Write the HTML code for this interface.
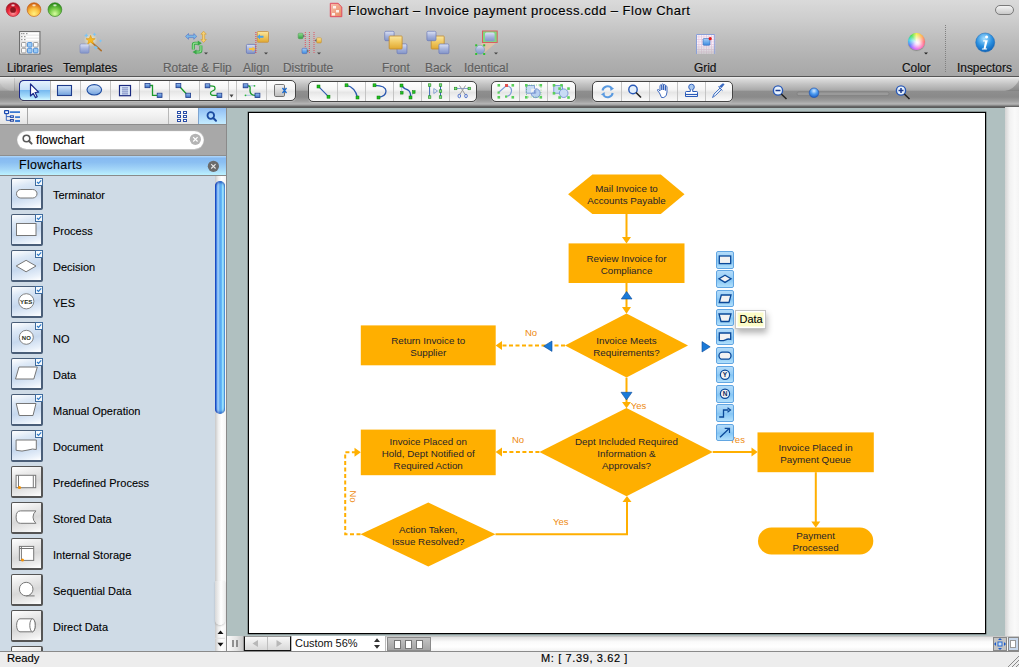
<!DOCTYPE html>
<html><head><meta charset="utf-8">
<style>
*{margin:0;padding:0;box-sizing:border-box}
html,body{width:1019px;height:667px;overflow:hidden;background:#b0c0c0;font-family:"Liberation Sans",sans-serif;}
.abs{position:absolute}
#top{left:0;top:0;width:1019px;height:77px;background:linear-gradient(#dadada 0px,#cdcdcd 20px,#bdbdbd 40px,#b0b0b0 60px,#a7a7a7 76px);border-bottom:1px solid #555}
.tl{position:absolute;top:2px;width:15px;height:15px;border-radius:50%}
.lbl{position:absolute;top:61px;font-size:11.9px;color:#111;-webkit-text-stroke:0.2px currentColor;white-space:nowrap;text-shadow:0 1px 0 rgba(255,255,255,0.35)}
.lbl.dis{color:#5e5e5e}
#tb2{left:0;top:77px;width:1019px;height:30px;background:linear-gradient(#f0f0f0 0px,#dcdcdc 2px,#c4c4c4 7px,#aaaaaa 13px,#8e8e8e 14.5px,#8a8a8a 20px,#9e9e9e 24px,#b6b6b6 27px,#7a7a7a 29px,#505050 30px);}
.seg{position:absolute;top:3px;height:21px;border:1px solid #454545;border-radius:5px;background:linear-gradient(#fefefe,#f6f6f6 40%,#e6e6e6 55%,#f2f2f2 80%,#fafafa);overflow:hidden;box-shadow:0 1px 1px rgba(255,255,255,0.3)}
.seg .d{position:absolute;top:0;bottom:0;width:1px;background:#c4c4c4}
#panel{left:0;top:107px;width:227px;height:544px;background:#cfdbe6;border-right:1px solid #8a8a8a}
#status{left:0;top:651px;width:1019px;height:16px;background:#ededed;border-top:1px solid #8a8a8a}
.st{position:absolute;font-size:11px;color:#000;-webkit-text-stroke:0.15px #000;white-space:nowrap}
.item{position:absolute;left:11px;width:32px;height:32px}
.ic{position:absolute;left:11px;width:32px;height:32px;border:1px solid #4c5c70;border-right-width:2px;border-bottom-width:2px;border-radius:2px}
.ic.b{background:linear-gradient(165deg,#ffffff 0,#dce8f6 25%,#c6d8ee 55%,#e8f0fa 85%,#ffffff 100%);border-color:#4a5e78}
.ic.g{background:linear-gradient(165deg,#ffffff 0,#ececec 25%,#d8d8d8 55%,#efefef 85%,#ffffff 100%);border-color:#555}
.ic svg{left:-1px!important;top:-1px!important}
.ic svg.chk{position:absolute;left:23px!important;top:-1px!important}
.qb{position:absolute;left:716px;width:18px;height:17.4px;border:1px solid #62a6e2;border-radius:2px;background:linear-gradient(#b4dcfa,#94cdf6 45%,#86c6f4 55%,#b2e0fc)}
.qb svg{position:absolute;left:-1px;top:-1px}
.itxt{position:absolute;left:53px;font-size:11px;color:#000;-webkit-text-stroke:0.1px #000;white-space:nowrap;letter-spacing:0}
</style></head><body>

<!-- TITLE + TOOLBAR -->
<div id="top" class="abs">
  <svg class="abs" style="left:0;top:0" width="70" height="20" viewBox="0 0 70 20">
  <defs>
   <radialGradient id="tlr" cx="0.5" cy="0.75" r="0.7"><stop offset="0" stop-color="#ff9aa0"/><stop offset="0.55" stop-color="#f0283a"/><stop offset="1" stop-color="#a01020"/></radialGradient>
   <radialGradient id="tlo" cx="0.5" cy="0.8" r="0.75"><stop offset="0" stop-color="#fff080"/><stop offset="0.5" stop-color="#fbc040"/><stop offset="1" stop-color="#d06010"/></radialGradient>
   <radialGradient id="tlg" cx="0.5" cy="0.8" r="0.75"><stop offset="0" stop-color="#d8fca0"/><stop offset="0.5" stop-color="#78cc48"/><stop offset="1" stop-color="#2a8a18"/></radialGradient>
   <radialGradient id="tlh" cx="0.5" cy="0.5" r="0.5"><stop offset="0" stop-color="#fff" stop-opacity="0.95"/><stop offset="1" stop-color="#fff" stop-opacity="0"/></radialGradient>
  </defs>
  <circle cx="13.05" cy="9.6" r="6.9" fill="url(#tlr)" stroke="#a81828" stroke-width="0.6"/>
  <circle cx="13.05" cy="9.9" r="2.9" fill="#8a1820"/>
  <ellipse cx="13.05" cy="5.3" rx="2.6" ry="1.6" fill="url(#tlh)"/>
  <circle cx="34" cy="9.6" r="6.9" fill="url(#tlo)" stroke="#c05a10" stroke-width="0.6"/>
  <ellipse cx="34" cy="5.3" rx="2.6" ry="1.6" fill="url(#tlh)"/>
  <circle cx="54.9" cy="9.6" r="6.9" fill="url(#tlg)" stroke="#2a7a18" stroke-width="0.6"/>
  <ellipse cx="54.9" cy="5.3" rx="2.6" ry="1.6" fill="url(#tlh)"/>
</svg>
  <svg class="abs" style="left:329px;top:2px" width="15" height="16" viewBox="0 0 15 16"><defs><linearGradient id="dg" x1="0" y1="0" x2="1" y2="1"><stop offset="0" stop-color="#f8c0b0"/><stop offset="1" stop-color="#e88a60"/></linearGradient></defs><path d="M1.3 1.3 H9 L12.8 5 V14.7 H1.3 Z" fill="url(#dg)" stroke="#e04a60" stroke-width="1"/><rect x="4" y="4" width="3" height="2.5" fill="#fff" opacity="0.85"/><rect x="7" y="8" width="3" height="2.5" fill="#fff" opacity="0.85"/><rect x="3" y="11" width="3" height="2.5" fill="#fff" opacity="0.85"/></svg>
  <div class="abs" style="left:348px;top:3px;font-size:13px;letter-spacing:0.5px;color:#000;-webkit-text-stroke:0.15px #000;white-space:nowrap;text-shadow:0 1px 0 rgba(255,255,255,.5)">Flowchart – Invoice payment process.cdd – Flow Chart</div>
  <div class="abs" style="left:995px;top:5px;width:19px;height:10px;border-radius:5px;border:1px solid #7a7a7a;background:linear-gradient(#f4f4f4,#c8c8c8)"></div>

  <div class="lbl" style="left:7px">Libraries</div>
  <div class="lbl" style="left:63px">Templates</div>
  <div class="lbl dis" style="left:163px">Rotate &amp; Flip</div>
  <div class="lbl dis" style="left:243px">Align</div>
  <div class="lbl dis" style="left:283px">Distribute</div>
  <div class="lbl dis" style="left:382px">Front</div>
  <div class="lbl dis" style="left:425px">Back</div>
  <div class="lbl dis" style="left:464px">Identical</div>
  <div class="lbl" style="left:694px">Grid</div>
  <div class="lbl" style="left:902px">Color</div>
  <div class="lbl" style="left:957px">Inspectors</div>
  <div class="abs" style="left:945px;top:25px;height:47px;border-left:1px dotted #808080"></div>
  <div class="abs" style="left:908px;top:33px;width:17.4px;height:17.4px;border-radius:50%;background:radial-gradient(circle at 55% 55%,#ffffff 0,rgba(255,255,255,0.85) 18%,rgba(255,255,255,0) 72%),conic-gradient(from 0deg,#f0f040,#ffa030 45deg,#ff3040 95deg,#ff30b0 150deg,#c030ff 200deg,#4060ff 240deg,#30d0e8 280deg,#40e050 320deg,#f0f040);box-shadow:0 1px 1px rgba(0,0,0,0.25)"></div>
<svg class="abs" style="left:0;top:0" width="1019" height="76" viewBox="0 0 1019 76">
<defs>
 <linearGradient id="ybx" x1="0" y1="0" x2="0" y2="1"><stop offset="0" stop-color="#fbe7a0"/><stop offset="0.5" stop-color="#f0c860"/><stop offset="1" stop-color="#e0a830"/></linearGradient>
 <linearGradient id="bbx" x1="0" y1="0" x2="0" y2="1"><stop offset="0" stop-color="#dce2f4"/><stop offset="0.5" stop-color="#a8b4dc"/><stop offset="1" stop-color="#8294c8"/></linearGradient>
 <linearGradient id="gbx" x1="0" y1="0" x2="0" y2="1"><stop offset="0" stop-color="#90e090"/><stop offset="1" stop-color="#30a040"/></linearGradient>
 <linearGradient id="lbb" x1="0" y1="0" x2="0" y2="1"><stop offset="0" stop-color="#a8d0f8"/><stop offset="1" stop-color="#3a8ae0"/></linearGradient>
 <radialGradient id="info" cx="0.45" cy="0.3" r="0.75"><stop offset="0" stop-color="#a8e0ff"/><stop offset="0.55" stop-color="#2a90e0"/><stop offset="1" stop-color="#0a5ab0"/></radialGradient>
 <radialGradient id="glow" cx="0.5" cy="0.5" r="0.5"><stop offset="0" stop-color="#fff8c0" stop-opacity="0.9"/><stop offset="1" stop-color="#fff8c0" stop-opacity="0"/></radialGradient>
</defs>
<!-- Libraries -->
<rect x="19.5" y="31.5" width="20.5" height="22.5" fill="#dcdcdc" stroke="#6e6e6e" stroke-width="1"/>
<g fill="#fff"><rect x="20.5" y="32.5" width="18.5" height="2.2"/><rect x="20.5" y="35.5" width="18.5" height="2.2"/><rect x="20.5" y="38.5" width="18.5" height="2.2"/></g>
<g fill="#9a9a9a"><rect x="21" y="33" width="1.5" height="1.2"/><rect x="23" y="33" width="1.5" height="1.2"/><rect x="26" y="33" width="1.5" height="1.2"/><rect x="21" y="36" width="1.5" height="1.2"/><rect x="24" y="36" width="1.5" height="1.2"/><rect x="21" y="39" width="1.5" height="1.2"/><rect x="24" y="39" width="1.5" height="1.2"/></g>
<rect x="20.5" y="41.5" width="18.5" height="12" fill="#f4f4f4"/>
<g stroke="#888" stroke-width="0.8" fill="#fafafa"><rect x="21.5" y="42.5" width="4.5" height="4.6" rx="0.8"/><rect x="33.5" y="42.5" width="4.5" height="4.6" rx="0.8"/><rect x="21.5" y="48.3" width="4.5" height="4.6" rx="0.8"/></g>
<g stroke="#3a80d0" stroke-width="0.8" fill="#9ccaf4"><rect x="27.5" y="42.5" width="4.5" height="4.6" rx="0.8"/><rect x="27.5" y="48.3" width="4.5" height="4.6" rx="0.8"/><rect x="33.5" y="48.3" width="4.5" height="4.6" rx="0.8"/></g>
<!-- Templates -->
<rect x="80" y="44" width="9" height="9.2" rx="1.2" fill="url(#bbx)" stroke="#7a88c0" stroke-width="0.6"/>
<circle cx="90.6" cy="40" r="7" fill="url(#glow)"/>
<path d="M91.5 42 L101.2 50.6" stroke="#b0702a" stroke-width="1.6" stroke-linecap="round"/>
<path d="M90.6 35.3 L91.9 38.5 L95.2 38.7 L92.6 40.8 L93.5 44 L90.6 42.2 L87.7 44 L88.6 40.8 L86 38.7 L89.3 38.5 Z" fill="#f8b820" stroke="#d89010" stroke-width="0.5"/>
<g fill="#7cc4f4"><path d="M86.3 33.3 l0.8 1.4 1.4 0.8 -1.4 0.8 -0.8 1.4 -0.8 -1.4 -1.4 -0.8 1.4 -0.8z"/><path d="M94.5 32.5 l0.7 1.2 1.2 0.7 -1.2 0.7 -0.7 1.2 -0.7 -1.2 -1.2 -0.7 1.2 -0.7z"/><path d="M100.5 39.2 l0.6 1 1 0.6 -1 0.6 -0.6 1 -0.6 -1 -1 -0.6 1 -0.6z"/><path d="M95.8 45.5 l0.8 1.3 1.3 0.8 -1.3 0.8 -0.8 1.3 -0.8 -1.3 -1.3 -0.8 1.3 -0.8z"/></g>
<!-- Rotate & Flip -->
<path d="M185.5 36.4 L188.5 33.5 V35.2 H193.8 V33.5 L196.8 36.4 L193.8 39.3 V37.6 H188.5 V39.3 Z" fill="#78b8e8" stroke="#5a7ac8" stroke-width="0.7"/>
<path d="M203.6 31.2 L206.3 34.2 H204.7 V39.5 H206.3 L203.6 42.5 L200.9 39.5 H202.5 V34.2 H200.9 Z" fill="#f8d070" stroke="#d0a040" stroke-width="0.7"/>
<path d="M193.3 49.5 V45 Q193.3 43.2 195 43.2 H198.5 M200.9 45.5 V50.3 Q200.9 52 199.2 52 H195.8" stroke="#3aa848" stroke-width="3" fill="none"/>
<path d="M193.3 49.5 V45 Q193.3 43.2 195 43.2 H198.5 M200.9 45.5 V50.3 Q200.9 52 199.2 52 H195.8" stroke="#90e090" stroke-width="1.2" fill="none"/>
<path d="M197.8 40.6 L201.8 43.2 L197.8 45.8 Z M196.5 49.4 L192.5 52 L196.5 54.6 Z" fill="#3aa848"/>
<path d="M204 52.5 H208 L206 54.5 Z" fill="#444"/>
<!-- Align -->
<rect x="257.3" y="31.5" width="11.2" height="10.8" rx="0.8" fill="url(#ybx)" stroke="#c89040" stroke-width="0.8"/>
<rect x="246.4" y="44.4" width="9" height="9" rx="1.2" fill="url(#bbx)" stroke="#6a7ab8" stroke-width="0.8"/>
<path d="M255.9 32 V54" stroke="#e04050" stroke-width="1" stroke-dasharray="1 1"/>
<path d="M257 36.8 L260 34.3 V35.8 H263.5 V37.8 H260 V39.3 Z" fill="#4aa0e8"/>
<path d="M255.5 49 L252.5 46.5 V48 H249 V50 H252.5 V51.5 Z" fill="#f8c040"/>
<path d="M264 52.5 H268 L266 54.5 Z" fill="#444"/>
<!-- Distribute -->
<path d="M305.3 32 V54 M309.4 32 V54 M314 32 V54" stroke="#e05060" stroke-width="1" stroke-dasharray="1 1"/>
<rect x="298.2" y="33.2" width="4.8" height="5.5" rx="1" fill="url(#gbx)" stroke="#5a9a5a" stroke-width="0.6"/>
<rect x="302" y="48.3" width="5" height="5.3" rx="1" fill="url(#lbb)" stroke="#4a6ab8" stroke-width="0.6"/>
<rect x="316.6" y="37.8" width="4.8" height="5.2" rx="1" fill="url(#ybx)" stroke="#c09040" stroke-width="0.6"/>
<path d="M303.2 34.5 L305 36 L303.2 37.5 Z M307.2 49.5 L309 51 L307.2 52.5 Z M316.4 39 L314.6 40.4 L316.4 41.8 Z" fill="#666"/>
<path d="M317 52.5 H321 L319 54.5 Z" fill="#444"/>
<!-- Front -->
<rect x="384.7" y="31.3" width="9.4" height="9.4" rx="1.2" fill="url(#bbx)" stroke="#6a7ab8" stroke-width="0.7"/>
<rect x="397" y="43.9" width="9.9" height="9.8" rx="1.2" fill="url(#bbx)" stroke="#6a7ab8" stroke-width="0.7"/>
<rect x="389.2" y="36" width="12.9" height="13" rx="0.8" fill="url(#ybx)" stroke="#c08a30" stroke-width="0.8"/>
<!-- Back -->
<rect x="431.2" y="36" width="13" height="13" rx="0.8" fill="url(#ybx)" stroke="#c08a30" stroke-width="0.8"/>
<rect x="426.9" y="31.3" width="9.1" height="9.4" rx="1.2" fill="url(#bbx)" stroke="#6a7ab8" stroke-width="0.7"/>
<rect x="438.9" y="44" width="10" height="9.7" rx="1.2" fill="url(#bbx)" stroke="#6a7ab8" stroke-width="0.7"/>
<!-- Identical -->
<path d="M477 46 L483 42 L497 42 L484 53 Z" fill="#f4c8a0" opacity="0.6"/>
<rect x="482.5" y="31" width="14.7" height="11.5" fill="#80d880" stroke="#d86060" stroke-width="1"/>
<rect x="485" y="32.5" width="9.6" height="8.7" rx="1.5" fill="url(#bbx)"/>
<circle cx="480.1" cy="49.6" r="4.4" fill="url(#bbx)" stroke="#5aa0b0" stroke-width="0.6"/>
<g fill="#30c030"><rect x="475.2" y="44.3" width="2" height="2"/><rect x="483.2" y="44.3" width="2" height="2"/><rect x="475.2" y="53" width="2" height="2"/><rect x="483.2" y="53" width="2" height="2"/></g>
<path d="M494 52.5 H498 L496 54.5 Z" fill="#444"/>
<!-- Grid -->
<defs><pattern id="gp" width="2.5" height="2.5" patternUnits="userSpaceOnUse" x="696" y="34"><rect width="2.5" height="2.5" fill="#e8c8e0"/><rect x="0.7" y="0.7" width="1.8" height="1.8" fill="#f8f4fc"/></pattern>
<linearGradient id="gfade" x1="0" y1="0" x2="0" y2="1"><stop offset="0" stop-color="#b0b0b0" stop-opacity="0"/><stop offset="1" stop-color="#b0b0b0" stop-opacity="0.6"/></linearGradient></defs>
<rect x="696" y="34" width="19.2" height="20" fill="url(#gp)"/>
<rect x="696" y="44" width="19.2" height="10" fill="url(#gfade)"/>
<path d="M696.5 54 V34.5 H714.7 V54" fill="none" stroke="#8aa0d8" stroke-width="1"/>
<rect x="703" y="38.5" width="7" height="6.8" rx="1" fill="url(#lbb)" stroke="#3a6ab8" stroke-width="0.6"/>
<circle cx="710.2" cy="38.7" r="1.6" fill="#e01818"/>
<!-- Color -->
<defs>
 <radialGradient id="cwW" cx="0.5" cy="0.5" r="0.5"><stop offset="0" stop-color="#fff" stop-opacity="1"/><stop offset="0.6" stop-color="#fff" stop-opacity="0.2"/><stop offset="1" stop-color="#fff" stop-opacity="0"/></radialGradient>
 <linearGradient id="cw1" x1="0" y1="0" x2="1" y2="1"><stop offset="0" stop-color="#30d880"/><stop offset="0.3" stop-color="#a0e840"/><stop offset="0.5" stop-color="#f8d040"/><stop offset="0.7" stop-color="#f04070"/><stop offset="1" stop-color="#c030f0"/></linearGradient>
 <linearGradient id="cw2" x1="1" y1="0" x2="0" y2="1"><stop offset="0" stop-color="#f8e040" stop-opacity="0.9"/><stop offset="0.5" stop-color="#fff" stop-opacity="0"/><stop offset="1" stop-color="#4060f8" stop-opacity="0.9"/></linearGradient>
</defs>

<path d="M924 52.5 H928 L926 54.5 Z" fill="#222"/>
<!-- Inspectors -->
<circle cx="985.2" cy="42.5" r="9.5" fill="url(#info)" stroke="#1a6ab8" stroke-width="0.5"/>
<path d="M986.6 35.5 a1.5 1.5 0 1 1 -0.01 0 Z" fill="#fff"/>
<path d="M983.3 40.3 H987.8 L985.6 48.5 H987.2 L986.8 49.6 H981.8 L982.2 48.5 H983.6 L985 41.4 H983 Z" fill="#fff"/>
</svg>
</div>

<!-- SECOND TOOLBAR -->
<div id="tb2" class="abs">
  <svg class="abs" style="left:0;top:0" width="1019" height="30" viewBox="0 0 1019 30"><path d="M0 6 Q4 14 14 14 V0 H0 Z" fill="rgba(255,255,255,0.12)"/><path d="M14.5 1 V14" stroke="rgba(0,0,0,0.10)" stroke-width="1"/><path d="M1019 0 V14 H1010 Q1016 12 1019 2 Z" fill="rgba(0,0,0,0.0)"/><path d="M1005 14 Q1014 13 1019 3 V14 Z" fill="rgba(0,0,0,0.18)"/></svg>
  <!-- group 1 -->
  <div class="seg" style="left:19px;top:3px;width:277px;height:21px">
    
    <div class="d" style="left:30px;background:#b9b9b9"></div>
    <div class="d" style="left:60px"></div>
    <div class="d" style="left:90px"></div>
    <div class="d" style="left:119px"></div>
    <div class="d" style="left:149px"></div>
    <div class="d" style="left:179px"></div>
    <div class="d" style="left:208px"></div>
    <div class="d" style="left:216px"></div>
    <div class="d" style="left:246px"></div>
  </div>
  <div class="abs" style="left:19px;top:3px;width:31px;height:21px;border:1px solid #1c2a8c;border-bottom-color:#3a3a5a;border-right:none;border-radius:5px 0 0 5px;background:linear-gradient(#e6f2fd 0,#c4def8 45%,#78baf0 50%,#a4dafa 80%,#d4f8ff 100%)"></div>
  <!-- group 2 -->
  <div class="seg" style="left:308px;top:4px;width:169px;height:21px">
    <div class="d" style="left:28px"></div>
    <div class="d" style="left:56px"></div>
    <div class="d" style="left:84px"></div>
    <div class="d" style="left:112px"></div>
    <div class="d" style="left:140px"></div>
  </div>
  <!-- group 3 -->
  <div class="seg" style="left:491px;top:4px;width:85px;height:21px">
    <div class="d" style="left:27px"></div>
    <div class="d" style="left:55px"></div>
  </div>
  <!-- group 4 -->
  <div class="seg" style="left:592px;top:4px;width:141px;height:21px">
    <div class="d" style="left:28px"></div>
    <div class="d" style="left:56px"></div>
    <div class="d" style="left:84px"></div>
    <div class="d" style="left:112px"></div>
  </div>
  <svg class="abs" style="left:0;top:0" width="1019" height="30" viewBox="0 77 1019 30">
    <!-- select arrow -->
    <path d="M30.5 84 L30.5 96 L33.2 93.3 L35.4 97.6 L37.2 96.7 L35.1 92.5 L38.6 92.2 Z" fill="#fff" stroke="#1a2a8a" stroke-width="1.2" stroke-linejoin="round"/>
    <defs>
      <linearGradient id="bf" x1="0" y1="0" x2="0" y2="1"><stop offset="0" stop-color="#d9eafc"/><stop offset="1" stop-color="#6f9fdc"/></linearGradient>
      <linearGradient id="sqg" x1="0" y1="0" x2="0" y2="1"><stop offset="0" stop-color="#9cc4f4"/><stop offset="1" stop-color="#3a6cc0"/></linearGradient>
    </defs>
    <rect x="57.5" y="85.5" width="14" height="10" fill="url(#bf)" stroke="#1e3c8c" stroke-width="1.1"/>
    <ellipse cx="94.3" cy="89.8" rx="7.3" ry="5.2" fill="url(#bf)" stroke="#1e4ca0" stroke-width="1.1"/>
    <rect x="119.5" y="85.5" width="11" height="10.2" fill="#e4f0fc" stroke="#1a2a80" stroke-width="1.2"/>
    <path d="M121.8 87.9h6.4M121.8 89.9h6.4M121.8 91.9h6.4M121.8 93.9h6.4" stroke="#4a5aa8" stroke-width="0.8"/>
    <!-- connectors -->
    <path d="M150 85.5 H152.5 V95.3 H157" fill="none" stroke="#1a9a2a" stroke-width="1.3"/>
    <rect x="145" y="83.5" width="5" height="4.2" fill="url(#sqg)" stroke="#1e3c8c" stroke-width="0.8"/>
    <rect x="157.2" y="93.2" width="4.8" height="4.2" fill="url(#sqg)" stroke="#1e3c8c" stroke-width="0.8"/>
    <path d="M180 87 L186.5 94" fill="none" stroke="#1a9a2a" stroke-width="1.3"/>
    <rect x="176" y="83.5" width="4.8" height="4.2" fill="url(#sqg)" stroke="#1e3c8c" stroke-width="0.8"/>
    <rect x="185.8" y="93.2" width="4.8" height="4.2" fill="url(#sqg)" stroke="#1e3c8c" stroke-width="0.8"/>
    <path d="M209.8 85.8 C215 85.8 215 86.5 215 89 C215 91 210.5 90.5 210.5 93 C210.5 95.5 212 95.3 217 95.3" fill="none" stroke="#1a9a2a" stroke-width="1.3"/>
    <rect x="205.2" y="83.8" width="4.6" height="4" fill="url(#sqg)" stroke="#1e3c8c" stroke-width="0.8"/>
    <rect x="217" y="93.2" width="4.8" height="4.2" fill="url(#sqg)" stroke="#1e3c8c" stroke-width="0.8"/>
    <path d="M229.5 94.5 L233.5 94.5 L231.5 97.5 Z" fill="#444"/>
    <path d="M248 85.8 L254 85.8 M246 95.3 L255 95.3" stroke="#9ab8e0" stroke-width="0.8"/>
    <path d="M247.9 85.8 C251 85.8 250 88 250 90.5 C250 93 251 95.3 255 95.3" fill="none" stroke="#1a9a2a" stroke-width="1.3"/>
    <circle cx="254.5" cy="85.8" r="0.9" fill="#2ab83a"/><circle cx="245.5" cy="95.3" r="0.9" fill="#2ab83a"/>
    <rect x="243.2" y="83.8" width="4.7" height="4" fill="url(#sqg)" stroke="#1e3c8c" stroke-width="0.8"/>
    <rect x="255" y="93.2" width="4.9" height="4.3" fill="url(#sqg)" stroke="#1e3c8c" stroke-width="0.8"/>
    <rect x="274.5" y="84.5" width="10" height="12" rx="1.2" fill="url(#gbox)" stroke="#666" stroke-width="0.9"/>
    <defs><linearGradient id="gbox" x1="0" y1="0" x2="0" y2="1"><stop offset="0" stop-color="#f4f4f4"/><stop offset="1" stop-color="#bcbcbc"/></linearGradient></defs>
    <path d="M282.5 88 L286.5 93 M286.5 88 L282.5 93" stroke="#1a6ad0" stroke-width="1.3"/>
    <!-- group 2 icons -->
    <g fill="#20c020" stroke="#0a7a0a" stroke-width="0.5">
    <path d="M318.4 86.4 L328.5 96.6" stroke="#2a58b0" stroke-width="1.1" fill="none"/>
    <rect x="317" y="85" width="3" height="3"/><rect x="327" y="95.2" width="3" height="3"/>
    <path d="M346.5 85.3 Q355 87 357.5 97.5" stroke="#2a58b0" stroke-width="1.3" fill="none"/>
    <rect x="345" y="83.8" width="3" height="3"/><rect x="356" y="96" width="3" height="3"/>
    <path d="M374.5 85.3 Q386 85.5 386 91 Q386 96 378.4 97.5" stroke="#2a58b0" stroke-width="1.3" fill="none"/>
    <rect x="373" y="83.8" width="3" height="3"/><rect x="377" y="96" width="3" height="3"/>
    <path d="M401.5 85.5 Q404 89 408 90 Q411 92 410.5 97.3" stroke="#2a58b0" stroke-width="1.3" fill="none"/>
    <path d="M401.5 85.5 L401.9 93 M410.5 97.3 L413.9 92" stroke="#8ab0e0" stroke-width="0.7" fill="none"/>
    <rect x="400" y="84" width="3" height="3"/><rect x="400.5" y="91.5" width="2.6" height="2.6"/><rect x="412.5" y="90.7" width="2.6" height="2.6"/><rect x="409" y="96" width="3" height="3"/>
    <path d="M429.6 85 V97 M440.5 85 V97" stroke="#3a68b8" stroke-width="1" fill="none"/>
    <path d="M433.8 88.5 L437.5 91 L433.8 93.5 Z" stroke="#7a9ad0" stroke-width="0.9" fill="none"/>
    <rect x="428.3" y="83.8" width="2.6" height="2.6" fill="#80e080"/><rect x="428.3" y="95.8" width="2.6" height="2.6" fill="#80e080"/>
    <rect x="439.2" y="83.8" width="2.6" height="2.6" fill="#80e080"/><rect x="439.2" y="89.8" width="2.6" height="2.6" fill="#80e080"/><rect x="439.2" y="95.8" width="2.6" height="2.6" fill="#80e080"/>
    <path d="M455 88.5 H470" stroke="#6a8ad0" stroke-width="0.8" fill="none"/>
    <path d="M459.5 85.5 L465.5 95 M465.5 85.5 L459.5 95" stroke="#9a9a9a" stroke-width="1" fill="none"/>
    <ellipse cx="459.3" cy="96" rx="1.3" ry="1.8" stroke="#5a7ad0" stroke-width="1" fill="none"/><ellipse cx="466" cy="96" rx="1.3" ry="1.8" stroke="#5a7ad0" stroke-width="1" fill="none"/>
    <rect x="454.3" y="87.2" width="2.6" height="2.6" fill="#80e080"/><rect x="468" y="87.2" width="2.6" height="2.6" fill="#80e080"/>
    </g>
    <!-- group 3 -->
    <g>
    <path d="M498.5 92.5 L506.5 85.5 Q512 87 511.5 91 Q511 96 506 96.5" stroke="#7a9ad8" stroke-width="1.1" fill="none"/>
    <rect x="505" y="84" width="3" height="3" fill="#e05050"/>
    <g fill="#5ad05a"><rect x="497.5" y="84" width="2.6" height="2.6"/><rect x="511.5" y="84" width="2.6" height="2.6"/><rect x="497.5" y="96" width="2.6" height="2.6"/><rect x="511.5" y="96" width="2.6" height="2.6"/><rect x="497.5" y="91.5" width="2.2" height="2.2"/><rect x="505" y="95.5" width="2.2" height="2.2"/></g>
    <path d="M526.2 85.5 H534.5 V93.2 H526.2 Z" fill="#c8dcf4" stroke="#6a8ad0" stroke-width="0.8"/>
    <path d="M531.2 93.2 V88.7 H535.7 Z" fill="#f4f4f4"/><path d="M535.7 88.7 A4.5 4.5 0 1 1 531.2 93.2 H535.7 Z" fill="#b8d0f0" stroke="#6a8ad0" stroke-width="0.8"/>
    <path d="M526.5 85 H541 V97 H526.5 Z" fill="none" stroke="#40c040" stroke-width="0.7" stroke-dasharray="0.8 1.6"/>
    <g fill="#5ad05a"><rect x="525" y="84" width="2.6" height="2.6"/><rect x="539.5" y="84" width="2.6" height="2.6"/><rect x="525" y="96" width="2.6" height="2.6"/><rect x="539.5" y="96" width="2.6" height="2.6"/></g>
    <rect x="553.8" y="85.5" width="8.7" height="7.7" fill="#c8dcf4" stroke="#6a8ad0" stroke-width="0.8"/>
    <circle cx="563.7" cy="93.2" r="4.3" fill="#c8dcf4" stroke="#6a8ad0" stroke-width="0.8"/>
    <g fill="#5ad05a"><rect x="552.7" y="84" width="2.6" height="2.6"/><rect x="560.2" y="84" width="2.6" height="2.6"/><rect x="552.7" y="92" width="2.6" height="2.6"/><rect x="558.3" y="87.3" width="2.6" height="2.6"/><rect x="567.2" y="87.3" width="2.6" height="2.6"/><rect x="558.3" y="96.2" width="2.6" height="2.6"/><rect x="567.2" y="96.2" width="2.6" height="2.6"/></g>
    </g>
    </g>
    <!-- group 4 -->
    <path d="M602.5 90.5 A5.2 5.2 0 0 1 611.5 88" stroke="#5a9ae0" stroke-width="2" fill="none"/>
    <path d="M612.7 93 A5.2 5.2 0 0 1 603.8 95.6" stroke="#5a9ae0" stroke-width="2" fill="none"/>
    <path d="M610 86 L614 88.5 L610.5 91 Z M605 96.8 L601 94.5 L604.5 92 Z" fill="#5a9ae0"/>
    <circle cx="633" cy="89.5" r="4.2" fill="#e4f0fc" stroke="#2a5ab8" stroke-width="1.4"/>
    <path d="M636 92.5 L641 97.5" stroke="#222" stroke-width="1.6"/>
    <path d="M659.5 93 L657.5 90.5 Q657 89.5 658.3 89.5 L660 91 V85.5 Q660.8 84.2 661.8 85.5 V90 V84.5 Q662.8 83.3 663.6 84.5 V90 V85 Q664.5 84 665.4 85 V90.5 V86.5 Q666.3 85.5 667 86.5 V92 Q667 96.5 663.8 97.5 H661.5 Z" fill="#fff" stroke="#2a5ab8" stroke-width="0.9" stroke-linejoin="round"/>
    <circle cx="691.5" cy="87" r="2.8" fill="#a8c8ee" stroke="#2a5ab8" stroke-width="0.9"/>
    <path d="M690.3 89.5 V91.5 H686.2 Q685.5 91.5 685.5 92.5 V96.5 H697.5 V92.5 Q697.5 91.5 696.8 91.5 H692.7 V89.5" fill="#fff" stroke="#2a5ab8" stroke-width="1"/>
    <path d="M685.5 94.5 H697.5" stroke="#2a5ab8" stroke-width="1.2"/>
    <path d="M712.5 97.5 L714 94 L720 88 L721.5 89.5 L715.5 95.5 Z" fill="#e0ecfa" stroke="#3a6ac0" stroke-width="0.9"/>
    <path d="M719 86.5 L722.5 83.5 Q724 83 724.5 84.5 L721.5 88 Z" fill="#3a6ac0"/>
    <path d="M718.3 86.5 L722.5 90.7" stroke="#3a6ac0" stroke-width="1"/>
    <!-- zoom slider -->
    <circle cx="778" cy="90.5" r="4.6" fill="#e8f2fc" stroke="#2a5ab8" stroke-width="1.4"/>
    <path d="M775.5 90.5 H780.5" stroke="#1a3a90" stroke-width="1.5"/>
    <path d="M781.3 94 L786.5 99" stroke="#222" stroke-width="1.5"/>
    <rect x="797" y="92" width="92" height="3.6" rx="1.8" fill="#9a9a9a" stroke="#7a7a7a" stroke-width="0.6"/>
    <circle cx="814" cy="92.8" r="4.8" fill="url(#knob)" stroke="#2a5ab0" stroke-width="0.7"/>
    <defs><radialGradient id="knob" cx="0.5" cy="0.3" r="0.7"><stop offset="0" stop-color="#d8ecff"/><stop offset="0.5" stop-color="#4a9af0"/><stop offset="1" stop-color="#1a5ac0"/></radialGradient></defs>
    <circle cx="901" cy="90.5" r="4.6" fill="#e8f2fc" stroke="#2a5ab8" stroke-width="1.4"/>
    <path d="M898.5 90.5 H903.5 M901 88 V93" stroke="#1a3a90" stroke-width="1.5"/>
    <path d="M904.3 94 L909.5 99" stroke="#222" stroke-width="1.5"/>
  </svg>
</div>

<!-- LEFT PANEL -->
<div id="panel" class="abs">
  <div class="abs" style="left:0;top:0;width:226px;height:18px;background:linear-gradient(#fbfbfb,#f1f1f1 50%,#e4e4e4);border-bottom:1px solid #8c8c8c"></div>
  <div class="abs" style="left:27px;top:0;width:1px;height:17px;background:#a8a8a8"></div>
  <div class="abs" style="left:168px;top:0;width:1px;height:17px;background:#b8b8b8"></div>
  <div class="abs" style="left:198px;top:0;width:28px;height:17px;background:linear-gradient(#8cbaf2,#a9d4fa 50%,#c4ecff);border-left:1px solid #7ea4d0"></div>
  <svg class="abs" style="left:0;top:0" width="226" height="18" viewBox="0 0 226 18">
    <rect x="4.6" y="3.6" width="4" height="3" rx="0.5" fill="#fff" stroke="#1a4ab0" stroke-width="1.3"/>
    <path d="M6.3 6.8 V13.4 H10 M6.3 9.6 H10" stroke="#2a5ab8" stroke-width="0.9" fill="none"/>
    <rect x="10.4" y="8.8" width="3" height="1.6" fill="#fff" stroke="#1a4ab0" stroke-width="1"/>
    <rect x="10.4" y="12.6" width="3" height="1.6" fill="#fff" stroke="#1a3a98" stroke-width="1"/>
    <path d="M10 5.2 H20 M15.1 10.1 H20 M15.1 14 H20" stroke="#3a78d0" stroke-width="1.8"/>
    <g transform="translate(0,1)"><g fill="#fff" stroke="#2a4ea8" stroke-width="1">
      <rect x="177.5" y="3.5" width="3" height="2"/><rect x="183.5" y="3.5" width="3" height="2"/>
      <rect x="177.5" y="7.5" width="3" height="2"/><rect x="183.5" y="7.5" width="3" height="2"/>
      <rect x="177.5" y="11.5" width="3" height="2"/><rect x="183.5" y="11.5" width="3" height="2"/>
    </g>
    <circle cx="210.8" cy="7.5" r="3.3" fill="none" stroke="#1a4aa0" stroke-width="1.8"/>
    <path d="M213.3 10 L216 12.7" stroke="#1a4aa0" stroke-width="2" stroke-linecap="round"/>
  </g></svg>
  <div class="abs" style="left:0;top:18px;width:226px;height:31px;background:#a8a8a8"></div>
  <div class="abs" style="left:17px;top:23px;width:187px;height:19px;border-radius:10px;background:#fff;box-shadow:inset 0 1px 1px rgba(0,0,0,0.35),0 1px 0 rgba(255,255,255,0.3)"></div>
  <svg class="abs" style="left:17px;top:23px" width="187" height="19" viewBox="0 0 187 19">
    <circle cx="9.5" cy="8.5" r="3.3" fill="none" stroke="#5a5a5a" stroke-width="1.6"/>
    <path d="M12 11 L14.6 13.6" stroke="#5a5a5a" stroke-width="2" stroke-linecap="round"/>
    <circle cx="178.4" cy="9.3" r="5.6" fill="#b4b4b4"/>
    <path d="M176.2 7.1 L180.6 11.5 M180.6 7.1 L176.2 11.5" stroke="#fff" stroke-width="1.2"/>
  </svg>
  <div class="abs" style="left:36px;top:26px;font-size:12px;color:#000;-webkit-text-stroke:0.1px #000;letter-spacing:0.05px">flowchart</div>
  <div class="abs" style="left:0;top:48px;width:226px;height:1px;background:#8e8e8e"></div><div class="abs" style="left:0;top:49px;width:226px;height:19px;background:linear-gradient(#b4dafc 0,#86baf2 12%,#8cc0f2 35%,#a4d6f8 70%,#bcf2ff 100%)"></div>
  <div class="abs" style="left:19px;top:51px;font-size:12.4px;color:#000;-webkit-text-stroke:0.1px #000;letter-spacing:0.35px">Flowcharts</div>
  <svg class="abs" style="left:206px;top:52px" width="14" height="14" viewBox="0 0 14 14">
    <circle cx="7.4" cy="7.3" r="5.6" fill="#6a6a6a"/>
    <path d="M5.2 5.1 L9.6 9.5 M9.6 5.1 L5.2 9.5" stroke="#e8e8e8" stroke-width="1.1"/>
  </svg>
  <div class="abs" style="left:0;top:68px;width:226px;height:1px;background:#8a8a8a"></div>
  <div class="ic b" style="top:71px"><svg class="abs" style="left:0;top:0" width="32" height="32" viewBox="0 0 32 32"><rect x="5.5" y="11.5" width="20.5" height="8.5" rx="4.25" fill="#fff" stroke="#777" stroke-width="1"/></svg><svg class="chk" width="8" height="8" viewBox="0 0 8 8"><rect x="0.5" y="0.5" width="7" height="7" fill="#f6f9fc" stroke="#3f6c9e" stroke-width="1"/><path d="M2 4 L3.5 5.4 L6.2 2.3" fill="none" stroke="#2a78c8" stroke-width="1.1"/></svg></div>
  <div class="itxt" style="top:82px">Terminator</div>
  <div class="ic b" style="top:107px"><svg class="abs" style="left:0;top:0" width="32" height="32" viewBox="0 0 32 32"><rect x="5.5" y="9.5" width="19.5" height="12" fill="#fff" stroke="#777" stroke-width="1"/></svg><svg class="chk" width="8" height="8" viewBox="0 0 8 8"><rect x="0.5" y="0.5" width="7" height="7" fill="#f6f9fc" stroke="#3f6c9e" stroke-width="1"/><path d="M2 4 L3.5 5.4 L6.2 2.3" fill="none" stroke="#2a78c8" stroke-width="1.1"/></svg></div>
  <div class="itxt" style="top:118px">Process</div>
  <div class="ic b" style="top:143px"><svg class="abs" style="left:0;top:0" width="32" height="32" viewBox="0 0 32 32"><path d="M5.2 16 L15.1 10.3 L25 16 L15.1 21.8 Z" fill="#fff" stroke="#777" stroke-width="1"/></svg><svg class="chk" width="8" height="8" viewBox="0 0 8 8"><rect x="0.5" y="0.5" width="7" height="7" fill="#f6f9fc" stroke="#3f6c9e" stroke-width="1"/><path d="M2 4 L3.5 5.4 L6.2 2.3" fill="none" stroke="#2a78c8" stroke-width="1.1"/></svg></div>
  <div class="itxt" style="top:154px">Decision</div>
  <div class="ic b" style="top:179px"><svg class="abs" style="left:0;top:0" width="32" height="32" viewBox="0 0 32 32"><circle cx="15.3" cy="15.3" r="7.6" fill="#fff" stroke="#777" stroke-width="0.9"/><text x="15.3" y="17.6" font-size="6.2" font-weight="bold" text-anchor="middle" fill="#2a3020" font-family="Liberation Sans">YES</text></svg><svg class="chk" width="8" height="8" viewBox="0 0 8 8"><rect x="0.5" y="0.5" width="7" height="7" fill="#f6f9fc" stroke="#3f6c9e" stroke-width="1"/><path d="M2 4 L3.5 5.4 L6.2 2.3" fill="none" stroke="#2a78c8" stroke-width="1.1"/></svg></div>
  <div class="itxt" style="top:190px">YES</div>
  <div class="ic b" style="top:215px"><svg class="abs" style="left:0;top:0" width="32" height="32" viewBox="0 0 32 32"><circle cx="15.3" cy="15.3" r="7" fill="#fff" stroke="#777" stroke-width="0.9"/><text x="15.3" y="17.5" font-size="6" font-weight="bold" text-anchor="middle" fill="#2a3020" font-family="Liberation Sans">NO</text></svg><svg class="chk" width="8" height="8" viewBox="0 0 8 8"><rect x="0.5" y="0.5" width="7" height="7" fill="#f6f9fc" stroke="#3f6c9e" stroke-width="1"/><path d="M2 4 L3.5 5.4 L6.2 2.3" fill="none" stroke="#2a78c8" stroke-width="1.1"/></svg></div>
  <div class="itxt" style="top:226px">NO</div>
  <div class="ic b" style="top:251px"><svg class="abs" style="left:0;top:0" width="32" height="32" viewBox="0 0 32 32"><g transform="translate(0,8)"><path d="M4.5 13 L8 1 L26.3 1 L22.8 13 Z" transform="translate(0,0)" fill="#fff" stroke="#777" stroke-width="1"/></g></svg><svg class="chk" width="8" height="8" viewBox="0 0 8 8"><rect x="0.5" y="0.5" width="7" height="7" fill="#f6f9fc" stroke="#3f6c9e" stroke-width="1"/><path d="M2 4 L3.5 5.4 L6.2 2.3" fill="none" stroke="#2a78c8" stroke-width="1.1"/></svg></div>
  <div class="itxt" style="top:262px">Data</div>
  <div class="ic b" style="top:287px"><svg class="abs" style="left:0;top:0" width="32" height="32" viewBox="0 0 32 32"><path d="M5.2 9.5 L25 9.5 L22 21.5 L8.2 21.5 Z" fill="#fff" stroke="#777" stroke-width="1"/></svg><svg class="chk" width="8" height="8" viewBox="0 0 8 8"><rect x="0.5" y="0.5" width="7" height="7" fill="#f6f9fc" stroke="#3f6c9e" stroke-width="1"/><path d="M2 4 L3.5 5.4 L6.2 2.3" fill="none" stroke="#2a78c8" stroke-width="1.1"/></svg></div>
  <div class="itxt" style="top:298px">Manual Operation</div>
  <div class="ic b" style="top:323px"><svg class="abs" style="left:0;top:0" width="32" height="32" viewBox="0 0 32 32"><path d="M5.1 10 H25.3 V19.5 Q22 18.3 17 20 Q11 22 5.1 20.3 Z" fill="#fff" stroke="#777" stroke-width="1"/></svg><svg class="chk" width="8" height="8" viewBox="0 0 8 8"><rect x="0.5" y="0.5" width="7" height="7" fill="#f6f9fc" stroke="#3f6c9e" stroke-width="1"/><path d="M2 4 L3.5 5.4 L6.2 2.3" fill="none" stroke="#2a78c8" stroke-width="1.1"/></svg></div>
  <div class="itxt" style="top:334px">Document</div>
  <div class="ic g" style="top:359px"><svg class="abs" style="left:0;top:0" width="32" height="32" viewBox="0 0 32 32"><rect x="5.1" y="9.3" width="19.6" height="12.4" fill="#fff" stroke="#777" stroke-width="1"/><path d="M7.5 9.3 V21.7 M22.3 9.3 V21.7" stroke="#777" stroke-width="1"/><circle cx="8.5" cy="21.5" r="1.6" fill="#f59000"/></svg></div>
  <div class="itxt" style="top:370px">Predefined Process</div>
  <div class="ic g" style="top:395px"><svg class="abs" style="left:0;top:0" width="32" height="32" viewBox="0 0 32 32"><path d="M9.5 8.9 H24.9 Q22 11.5 22 15.1 Q22 18.7 24.9 21.3 H9.5 Q5.1 21.3 5.1 15.1 Q5.1 8.9 9.5 8.9 Z" fill="#fff" stroke="#777" stroke-width="1"/></svg></div>
  <div class="itxt" style="top:406px">Stored Data</div>
  <div class="ic g" style="top:431px"><svg class="abs" style="left:0;top:0" width="32" height="32" viewBox="0 0 32 32"><rect x="8.4" y="8.4" width="14.3" height="14" fill="#fff" stroke="#777" stroke-width="1"/><path d="M10.4 8.4 V22.4 M8.4 10.5 H22.7" stroke="#777" stroke-width="1"/><circle cx="11.5" cy="22" r="1.5" fill="#f59000"/></svg></div>
  <div class="itxt" style="top:442px">Internal Storage</div>
  <div class="ic g" style="top:467px"><svg class="abs" style="left:0;top:0" width="32" height="32" viewBox="0 0 32 32"><circle cx="15.2" cy="15.1" r="6.8" fill="#fff" stroke="#777" stroke-width="1"/><path d="M15.2 21.9 H23.6" stroke="#777" stroke-width="1"/></svg></div>
  <div class="itxt" style="top:478px">Sequential Data</div>
  <div class="ic g" style="top:503px"><svg class="abs" style="left:0;top:0" width="32" height="32" viewBox="0 0 32 32"><path d="M9 8.8 H21.5 A2.7 6.5 0 0 1 21.5 21.8 H9 A3.4 6.5 0 0 1 9 8.8 Z" fill="#fff" stroke="#777" stroke-width="1"/><ellipse cx="21.5" cy="15.3" rx="2.7" ry="6.5" fill="#fff" stroke="#777" stroke-width="1"/></svg></div>
  <div class="itxt" style="top:514px">Direct Data</div>
  <div class="ic g" style="top:539px"><svg class="abs" style="left:0;top:0" width="32" height="32" viewBox="0 0 32 32"></svg></div>
  <div class="abs" style="left:215px;top:69px;width:11px;height:475px;background:linear-gradient(90deg,#c8c8c8,#eeeeee 30%,#fff 60%,#f4f4f4)"></div>
  <div class="abs" style="left:215px;top:74px;width:10px;height:233px;border-radius:5px;background:linear-gradient(90deg,#1446c8 0,#3a7ae2 12%,#a8d4fa 30%,#58a4f0 50%,#62b8f8 65%,#b0f2ff 80%,#4aa0ea 100%);box-shadow:inset 0 2px 2px rgba(0,30,150,0.5),inset 0 -2px 2px rgba(0,30,150,0.4)"></div>
  <div class="abs" style="left:215px;top:474px;width:10px;height:44px;border-radius:0 0 5px 5px;background:linear-gradient(90deg,#d8d8d8,#fff 60%,#eee);box-shadow:0 1px 2px rgba(0,0,0,0.2)"></div>
  <svg class="abs" style="left:214px;top:518px" width="12" height="26" viewBox="0 0 12 26">
    <path d="M3.5 9 L6.5 5.5 L9.5 9 Z" fill="#111"/>
    <path d="M1 13.3 H11" stroke="#ddd" stroke-width="1"/>
    <path d="M3.5 17.8 L6.5 21.5 L9.5 17.8 Z" fill="#111"/>
  </svg>
</div>

<div class="abs" style="left:0;top:107px;width:1019px;height:1px;background:#5a5a5a"></div>
<!-- CANVAS -->
<div class="abs" style="left:248px;top:112px;width:738px;height:522px;background:#fff;border:1px solid #000;box-shadow:0 0 0 0.4px rgba(0,0,0,0.6)"></div>
<svg class="abs" style="left:0;top:0" width="1019" height="667" viewBox="0 0 1019 667">
<g fill="#ffaf00">
  <path d="M568.1 194.3 L592.4 174.5 L660.8 174.5 L684.5 194.3 L660.8 214 L592.4 214 Z"/>
  <rect x="568.6" y="243.4" width="115.9" height="39.6"/>
  <path d="M626.5 313.6 L688 345.5 L626.5 377.6 L565 345.5 Z"/>
  <rect x="360.8" y="325.4" width="134.9" height="39.9"/>
  <path d="M626.5 408 L712.8 452 L626.5 496.3 L539.4 452 Z"/>
  <rect x="360.8" y="429.6" width="134.9" height="45.6"/>
  <rect x="757.5" y="432.4" width="116.3" height="39.8"/>
  <rect x="758" y="527.5" width="115.3" height="27" rx="13.5"/>
  <path d="M428.3 502.6 L495.5 534.3 L428.3 566.4 L360.5 534.3 Z"/>
</g>
<g stroke="#ffaf00" stroke-width="2" fill="none">
  <path d="M626.5 214 V238"/>
  <path d="M626.5 283 V308"/>
  <path d="M626.5 377.6 V402.5"/>
  <path d="M712.8 452 H752"/>
  <path d="M815.8 472.2 V522"/>
  <path d="M495.5 534.3 H627 V501.5"/>
  <path d="M565 345.5 H501" stroke-dasharray="4 2.5"/>
  <path d="M539.4 452 H501" stroke-dasharray="4 2.5"/>
  <path d="M360.5 534.3 H345.2 V452.3 H355" stroke-dasharray="4 2.5"/>
</g>
<g fill="#ffaf00">
  <path d="M622 237 L631 237 L626.5 243.6 Z"/>
  <path d="M622 307 L631 307 L626.5 313.8 Z"/>
  <path d="M622 402 L631 402 L626.5 408.2 Z"/>
  <path d="M751.5 447.5 L751.5 456.5 L757.7 452 Z"/>
  <path d="M811.3 521.5 L820.3 521.5 L815.8 527.7 Z"/>
  <path d="M622.5 502 L631.5 502 L627 496 Z"/>
  <path d="M502 341 L502 350 L495.6 345.5 Z"/>
  <path d="M502 447.5 L502 456.5 L495.6 452 Z"/>
  <path d="M354.5 447.8 L354.5 456.8 L360.8 452.3 Z"/>
</g>
<g fill="#ee8a10" font-family="Liberation Sans" font-size="9.5">
  <text x="525" y="336.2">No</text>
  <text x="512" y="443">No</text>
  <text x="630.8" y="408.5">Yes</text>
  <text x="553" y="524.6">Yes</text>
  <text x="729.4" y="443">Yes</text>
  <text transform="translate(349.5,490.5) rotate(90)" x="0" y="0">No</text>
</g>
<g fill="#28242a" font-family="Liberation Sans" font-size="9.8" text-anchor="middle" transform="translate(0,0.4)">
<text x="626.5" y="191.2">Mail Invoice to</text>
<text x="626.5" y="204.0">Accounts Payable</text>
<text x="626.5" y="261.8">Review Invoice for</text>
<text x="626.5" y="274.0">Compliance</text>
<text x="626.5" y="344.0">Invoice Meets</text>
<text x="626.5" y="355.6">Requirements?</text>
<text x="428.2" y="343.7">Return Invoice to</text>
<text x="428.2" y="355.9">Supplier</text>
<text x="626.5" y="445.0">Dept Included Required</text>
<text x="626.5" y="456.8">Information &amp;</text>
<text x="626.5" y="468.6">Approvals?</text>
<text x="428.2" y="445.0">Invoice Placed on</text>
<text x="428.2" y="456.8">Hold, Dept Notified of</text>
<text x="428.2" y="468.6">Required Action</text>
<text x="815.6" y="450.4">Invoice Placed in</text>
<text x="815.6" y="462.7">Payment Queue</text>
<text x="815.6" y="538.5">Payment</text>
<text x="815.6" y="550.4">Processed</text>
<text x="428.2" y="532.8">Action Taken,</text>
<text x="428.2" y="544.4">Issue Resolved?</text>
</g>
<!-- blue handles -->
<g fill="#1a7ad8" stroke="#0a4a9a" stroke-width="0.6">
  <path d="M621.3 299 L632 299 L626.6 291.5 Z"/>
  <path d="M552 341 L552 351.4 L543.6 346.2 Z"/>
  <path d="M702 341.6 L702 352 L710.2 346.8 Z"/>
  <path d="M621 392.3 L632 392.3 L626.5 400 Z"/>
</g>
</svg>
<div class="abs" style="left:735px;top:310px;width:31px;height:19px;background:#fcfcc8;border:1px solid #c4c4c4;box-shadow:inset 0 0 0 1.5px #fff,1px 4px 6px rgba(0,0,0,0.3)"></div>
<div class="abs" style="left:739.5px;top:313px;font-size:11px;color:#000;-webkit-text-stroke:0.1px #000">Data</div>
<div class="qb" style="top:251.3px"><svg width="18" height="18" viewBox="0 0 18 18"><rect x="3.3" y="5" width="11.4" height="7.6" fill="#f2f2f2" stroke="#0a4898" stroke-width="1.3"/></svg></div>
<div class="qb" style="top:270.4px"><svg width="18" height="18" viewBox="0 0 18 18"><path d="M3 8.7 L9 5.2 L15 8.7 L9 12.4 Z" fill="#f2f2f2" stroke="#0a4898" stroke-width="1.3"/></svg></div>
<div class="qb" style="top:289.6px"><svg width="18" height="18" viewBox="0 0 18 18"><path d="M3.3 12.5 L5.3 5 L15 5 L13 12.5 Z" fill="#f2f2f2" stroke="#0a4898" stroke-width="1.3"/></svg></div>
<div class="qb" style="top:308.7px"><svg width="18" height="18" viewBox="0 0 18 18"><path d="M3 5 L15 5 L13 12.5 L5 12.5 Z" fill="#f2f2f2" stroke="#0a4898" stroke-width="1.3"/></svg></div>
<div class="qb" style="top:327.8px"><svg width="18" height="18" viewBox="0 0 18 18"><path d="M3.3 5 H14.7 V11.3 Q12 10.5 9.5 11.8 Q6 13.3 3.3 12.3 Z" fill="#f2f2f2" stroke="#0a4898" stroke-width="1.3"/></svg></div>
<div class="qb" style="top:346.9px"><svg width="18" height="18" viewBox="0 0 18 18"><rect x="3" y="5.2" width="12" height="7" rx="3.5" fill="#f2f2f2" stroke="#0a4898" stroke-width="1.3"/></svg></div>
<div class="qb" style="top:366.1px"><svg width="18" height="18" viewBox="0 0 18 18"><circle cx="9" cy="8.8" r="4.6" fill="#f2f2f2" stroke="#0a4898" stroke-width="1.2"/><text x="9" y="11.2" font-size="6.5" font-weight="bold" text-anchor="middle" fill="#0a2a60" font-family="Liberation Sans">Y</text></svg></div>
<div class="qb" style="top:385.2px"><svg width="18" height="18" viewBox="0 0 18 18"><circle cx="9" cy="8.8" r="4.6" fill="#f2f2f2" stroke="#0a4898" stroke-width="1.2"/><text x="9" y="11.2" font-size="6.5" font-weight="bold" text-anchor="middle" fill="#0a2a60" font-family="Liberation Sans">N</text></svg></div>
<div class="qb" style="top:404.3px"><svg width="18" height="18" viewBox="0 0 18 18"><path d="M3.2 13 H7.5 V6 H12.5" fill="none" stroke="#0a4898" stroke-width="1.3"/><path d="M11.5 3.8 L14.5 6 L11.5 8.2" fill="none" stroke="#0a4898" stroke-width="1.2"/></svg></div>
<div class="qb" style="top:423.5px"><svg width="18" height="18" viewBox="0 0 18 18"><path d="M4 13.3 L13.2 4.5" fill="none" stroke="#0a4898" stroke-width="1.3"/><path d="M8.7 4.3 H13.5 V9" fill="none" stroke="#0a4898" stroke-width="1.2"/></svg></div>
<!-- right vertical scrollbar -->
<div class="abs" style="left:1005px;top:107px;width:14px;height:529px;background:linear-gradient(90deg,#d4d4d4,#f2f2f2 35%,#fafafa 70%,#f4f4f4)"></div>
<!-- bottom horizontal scrollbar -->
<div class="abs" style="left:227px;top:636px;width:792px;height:15px;background:linear-gradient(#e0e0e0,#fbfbfb 35%,#ffffff 70%,#f2f2f2);border-top:1px solid #c8c8c8"></div>
<div class="abs" style="left:227px;top:636px;width:17px;height:15px;background:linear-gradient(90deg,#fafafa,#e4e4e4 60%,#c8c8c8);border-right:1px solid #999"></div>
<svg class="abs" style="left:227px;top:636px" width="17" height="15" viewBox="0 0 17 15"><path d="M6 4 V11 M10 4 V11" stroke="#555" stroke-width="1.2"/></svg>
<div class="abs" style="left:244px;top:636px;width:47px;height:15px;background:linear-gradient(#f8f8f8,#e8e8e8 50%,#d8d8d8);border:1px solid #111;border-top-color:#999"></div>
<div class="abs" style="left:267px;top:637px;width:1px;height:13px;background:#c0c0c0"></div>
<svg class="abs" style="left:244px;top:636px" width="47" height="15" viewBox="0 0 47 15"><path d="M8.5 7.5 L14 4 V11 Z M38 7.5 L32.5 4 V11 Z" fill="#b8b8b8"/></svg>
<div class="abs" style="left:291px;top:636px;width:95px;height:15px;background:#fff;border-left:1px solid #bbb;border-right:1px solid #bbb"></div>
<div class="abs" style="left:295px;top:637px;font-size:11px;color:#111;letter-spacing:-0.05px">Custom 56%</div>
<svg class="abs" style="left:372px;top:636px" width="10" height="15" viewBox="0 0 10 15"><path d="M2 6 L5 2.3 L8 6 Z M2 9 L5 12.7 L8 9 Z" fill="#333"/></svg>
<div class="abs" style="left:387px;top:637px;width:44px;height:14px;background:linear-gradient(#c4c4c4,#a4a4a4);border:1px solid #8a8a8a"></div>
<div class="abs" style="left:394px;top:640px;width:7px;height:9px;background:#fff;border:1px solid #777"></div>
<div class="abs" style="left:405px;top:640px;width:7px;height:9px;background:#fff;border:1px solid #777"></div>
<div class="abs" style="left:416px;top:640px;width:7px;height:9px;background:#fff;border:1px solid #777"></div>
<div class="abs" style="left:993px;top:637px;width:14px;height:14px;background:#c4c4c4;border:1px solid #888"></div>
<svg class="abs" style="left:993px;top:637px" width="14" height="14" viewBox="0 0 14 14"><rect x="5" y="5" width="4" height="4" fill="#cfe4fa" stroke="#2a6ad0" stroke-width="1"/><path d="M7 1 L9 3 H5 Z M7 13 L9 11 H5 Z M1 7 L3 5 V9 Z M13 7 L11 5 V9 Z" fill="#1a5ac8"/></svg>
<div class="abs" style="left:1008px;top:637px;width:11px;height:14px;background:#c8d8ec;border:1px solid #888"></div>
<div class="abs" style="left:1010px;top:640px;width:6px;height:8px;background:#fff;border:1px solid #999"></div>


<!-- STATUS -->
<div id="status" class="abs">
  <div class="st" style="left:7px;top:0px;font-size:11.2px">Ready</div>
  <div class="st" style="left:541px;top:0px;letter-spacing:0.62px">M: [ 7.39, 3.62 ]</div>
</div>
<svg class="abs" style="left:1005px;top:653px" width="14" height="14" viewBox="0 0 14 14"><path d="M3 14 L14 3 M7 14 L14 7 M11 14 L14 11" stroke="#8a8a8a" stroke-width="1"/></svg>
</body></html>
